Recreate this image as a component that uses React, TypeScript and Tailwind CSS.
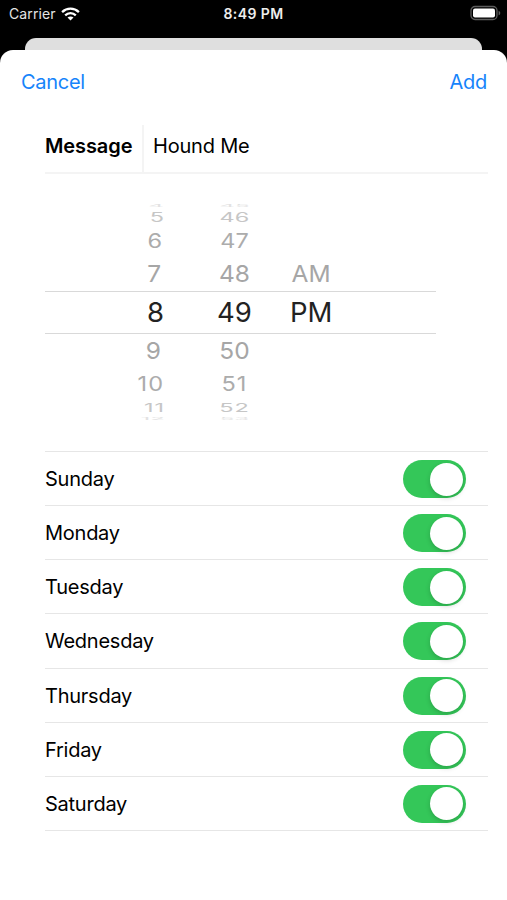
type WheelRow = {
  hour: string;
  minute: string;
  period?: string;
  row: string;
  glyph: string;
  hourEdge: string;
};

const wheel: WheelRow[] = [
  { hour: '4', minute: '45', row: 'h-[4px] items-center text-[#e2e2e2]', glyph: 'text-[24px] leading-[4px] scale-y-[0.14]', hourEdge: 'pr-[1px]' },
  { hour: '5', minute: '46', row: 'h-[17px] items-center pt-[2px] text-[#c6c6c6]', glyph: 'text-[23.5px] leading-none scale-y-[0.55]', hourEdge: 'pr-px' },
  { hour: '6', minute: '47', row: 'h-[31px] items-center pt-px text-[#acacac]', glyph: 'text-[23.5px] leading-none scale-y-[0.84]', hourEdge: 'pr-[3px]' },
  { hour: '7', minute: '48', period: 'AM', row: 'h-[35px] items-center text-[#a6a6a6]', glyph: 'text-[24.5px] leading-none scale-y-[0.96]', hourEdge: 'pr-[4px]' },
  { hour: '8', minute: '49', period: 'PM', row: 'h-[43px] items-center border-y border-[#d9d9d9] text-[#222]', glyph: 'text-[27.5px] leading-none', hourEdge: 'pr-[1px]' },
  { hour: '9', minute: '50', row: 'h-[35px] items-center pb-[2px] text-[#a6a6a6]', glyph: 'text-[24.5px] leading-none scale-y-[0.96]', hourEdge: 'pr-[4px]' },
  { hour: '10', minute: '51', row: 'h-[31px] items-center pb-px text-[#acacac]', glyph: 'text-[23.5px] leading-none scale-y-[0.84] tracking-[1px]', hourEdge: 'pr-px' },
  { hour: '11', minute: '52', row: 'h-[17px] items-center pb-[2px] text-[#c6c6c6]', glyph: 'text-[23.5px] leading-none scale-y-[0.5] tracking-[1px]', hourEdge: 'pr-0' },
  { hour: '12', minute: '53', row: 'h-[4px] items-center text-[#e2e2e2]', glyph: 'text-[24px] leading-[4px] scale-y-[0.14]', hourEdge: 'pr-0' },
];

const days = ['Sunday', 'Monday', 'Tuesday', 'Wednesday', 'Thursday', 'Friday', 'Saturday'];

function WifiIcon() {
  return (
    <svg width="19" height="14" viewBox="0 0 19 14" fill="none" stroke="#fff" strokeWidth="2.3">
      <path d="M1.1 5.1C5.9.5 13.1.5 17.9 5.1" />
      <path d="M4.2 8.3c3-2.9 7.6-2.9 10.6 0" />
      <path d="M9.5 13.6 6.5 10.6c1.7-1.6 4.3-1.6 6 0Z" fill="#fff" stroke="none" />
    </svg>
  );
}

function BatteryIcon() {
  return (
    <svg width="31" height="16" viewBox="0 -0.5 31 16" fill="none">
      <rect x="1" y="1" width="26" height="13" rx="4" stroke="#5c5c5c" strokeWidth="1.3" />
      <rect x="3" y="3" width="22" height="9" rx="2" fill="#fff" />
      <path d="M28.6 5.2c2.2.8 2.2 3.8 0 4.6Z" fill="#5c5c5c" />
    </svg>
  );
}

function Toggle() {
  return (
    <button
      role="switch"
      aria-checked="true"
      className="flex h-[38px] w-[63px] items-center justify-end rounded-full bg-[#34c759] pr-[3px]"
    >
      <span className="size-[33px] rounded-full bg-white shadow-[0_2px_5px_rgba(0,0,0,0.18)]" />
    </button>
  );
}

export default function App() {
  return (
    <div className="flex h-[900px] w-[507px] flex-col overflow-hidden bg-black font-['Inter','Liberation_Sans',sans-serif] text-black">
      <header className="grid h-[38px] grid-cols-3 items-start pt-[5px] text-white">
        <div className="flex items-center gap-[5px] pl-[9px]">
          <span className="text-[14px] leading-[18px] tracking-[0.1px] text-[#e4e4e4]">Carrier</span>
          <WifiIcon />
        </div>
        <div className="text-center text-[14px] leading-[18px] font-semibold tracking-[0.4px] text-[#ededed]">8:49 PM</div>
        <div className="flex justify-end pr-[6px]">
          <BatteryIcon />
        </div>
      </header>
      <div className="mx-[25px] h-[12px] shrink-0 rounded-t-[11px] bg-[#dfdfdf]" />
      <main className="flex grow flex-col rounded-t-[13px] bg-white">
        <nav className="flex h-[65px] items-center justify-between pr-[20px] pb-px pl-[21px] text-[20px] text-[#1684fb]">
          <button className="tracking-[-0.3px]">Cancel</button>
          <button className="tracking-[-0.3px]">Add</button>
        </nav>
        <section className="mt-[10px] mr-[19px] ml-[45px] flex h-[49px] border-b-2 border-[#f4f4f4]">
          <div className="flex w-[99px] items-center border-r-2 border-[#f4f4f4] pb-[5px] text-[20px]">
            <span className="font-semibold tracking-[-0.1px]">Message</span>
          </div>
          <div className="flex items-center pb-[5px] pl-[9px] text-[20px] tracking-[-0.2px]">Hound Me</div>
        </section>
        <section className="mt-[30px] mr-[71px] ml-[45px] flex flex-col">
          {wheel.map((r) => (
            <div key={r.hour} className={`flex ${r.row}`}>
              <div className={`w-[120px] text-right ${r.glyph} ${r.hourEdge}`}>{r.hour}</div>
              <div className={`w-[139px] text-center ${r.glyph}`}>{r.minute}</div>
              {r.period && (
                <div className={`-ml-[14px] whitespace-nowrap ${r.glyph} ${r.period === 'AM' ? 'pl-[1.5px]' : ''}`}>
                  {r.period}
                </div>
              )}
            </div>
          ))}
        </section>
        <ul className="mt-[30px] mr-[19px] ml-[45px] flex h-[380px] flex-col border-t border-[#e6e6e6]">
          {days.map((name) => (
            <li key={name} className="flex flex-1 items-center justify-between border-b border-[#e6e6e6] pt-px pr-[22px]">
              <span className="text-[20px] tracking-[-0.25px]">{name}</span>
              <Toggle />
            </li>
          ))}
        </ul>
      </main>
    </div>
  );
}
